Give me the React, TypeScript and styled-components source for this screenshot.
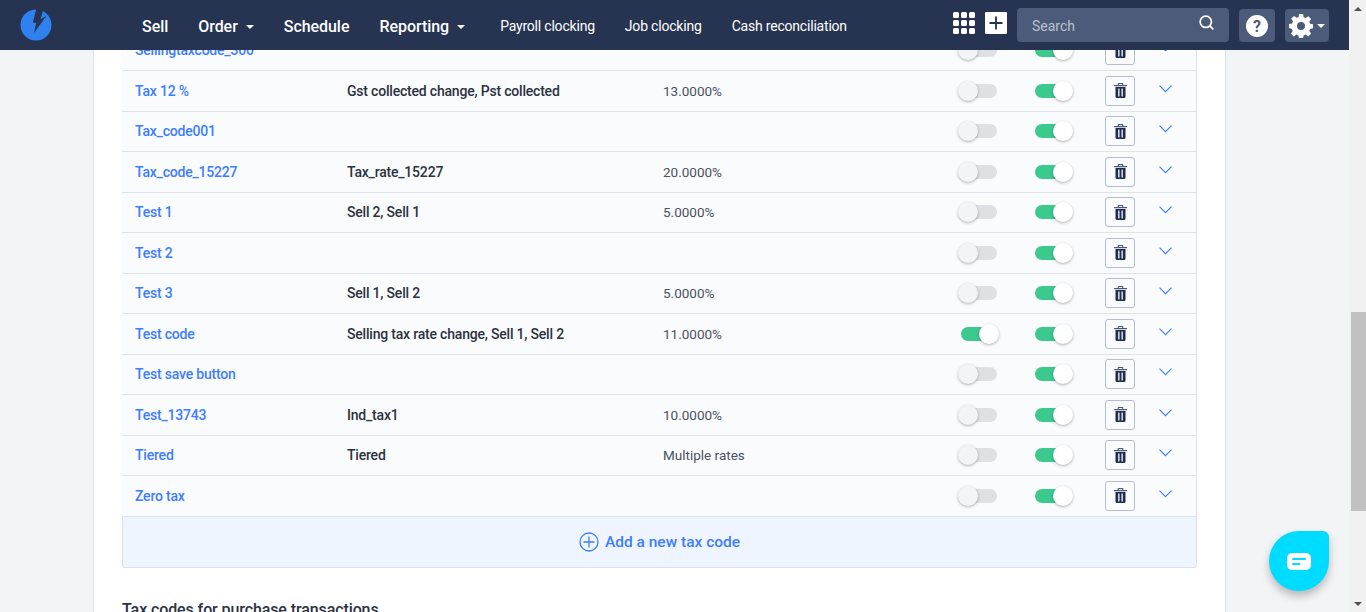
import React from "react";
import styled, { createGlobalStyle } from "styled-components";
import { Search, Plus } from "lucide-react";

const GlobalStyle = createGlobalStyle`
    html, body {
        margin: 0;
        padding: 0;
        height: 100%;
        overflow: hidden;
        font-family: Roboto, "Liberation Sans", sans-serif;
    }
    * { box-sizing: border-box; }
`;

const Shell = styled.div`
    display: flex;
    height: 612px;
    width: 1366px;
    overflow: hidden;
    position: relative;
`;

const PageColumn = styled.div`
    flex: 1;
    min-width: 0;
    display: flex;
    flex-direction: column;
    background: #f3f4f6;
`;

const TopBar = styled.header`
    position: relative;
    z-index: 2;
    flex: 0 0 50px;
    height: 50px;
    background: #273451;
    display: flex;
    align-items: center;
    padding-left: 20px;
    color: #fff;
`;

const Logo = styled.svg`
    width: 32px;
    height: 32px;
    margin-right: 90px;
`;

const MainNav = styled.nav`
    display: flex;
    align-items: center;
    gap: 30px;
    margin-top: 3px;
`;

const MainLink = styled.a`
    display: flex;
    align-items: center;
    font-size: 16px;
    font-weight: 500;
    white-space: nowrap;
    letter-spacing: -0.05px;
`;

const Caret = styled.span<{ $gap?: number }>`
    display: inline-block;
    margin-left: ${(p) => p.$gap ?? 8}px;
    border-left: 4px solid transparent;
    border-right: 4px solid transparent;
    border-top: 4px solid #fff;
`;

const SubNav = styled.nav`
    display: flex;
    gap: 30px;
    margin-left: 35px;
    margin-top: 1px;
`;

const SubLink = styled.a`
    font-size: 14px;
    letter-spacing: -0.2px;
    white-space: nowrap;
    color: #fff;
`;

const TopRight = styled.div`
    margin-left: auto;
    display: flex;
    align-items: center;
    padding-right: 20px;
`;

const AppGrid = styled.div`
    display: grid;
    grid-template-columns: repeat(3, 6px);
    grid-auto-rows: 6px;
    gap: 2px;
    margin: 0 10px 4px 0;
`;

const GridDot = styled.span`
    background: #fff;
    border-radius: 1.5px;
`;

const AddBox = styled.div`
    width: 22px;
    height: 22px;
    background: #fff;
    border-radius: 1px;
    color: #273451;
    display: flex;
    align-items: center;
    justify-content: center;
    margin: 0 10px 4px 0;
`;

const SearchBox = styled.div`
    width: 212px;
    height: 34px;
    border-radius: 4px;
    background: #4d5b7a;
    display: flex;
    align-items: center;
    justify-content: space-between;
    padding: 2px 14px 0 15px;
    font-size: 14px;
    color: #b9c0cf;
    margin-right: 10px;
`;

const SearchIcon = styled(Search)`
    margin-top: -7px;
`;

const IconTile = styled.div<{ $width: number }>`
    width: ${(p) => p.$width}px;
    height: 33px;
    margin-top: 1px;
    border-radius: 4px;
    background: #4d5b7a;
    display: flex;
    align-items: center;
    justify-content: center;
    gap: 3px;
    margin-right: 10px;
    &:last-child { margin-right: 0; }
`;

const Body = styled.main`
    flex: 1;
    min-height: 0;
    overflow: hidden;
    padding-left: 93px;
`;

const Card = styled.div`
    width: 1133px;
    background: #fff;
    border-left: 1px solid #dfe2ea;
    border-right: 1px solid #dfe2ea;
    padding: 0 28px;
    height: 100%;
    overflow: hidden;
`;

const Rows = styled.div`
    margin-top: -19.5px;
`;

const Row = styled.div`
    display: grid;
    grid-template-columns: 212px 316px 298px 74px 70px 54px 1fr;
    align-items: center;
    height: 40.5px;
    padding-left: 13px;
    background: #fafbfd;
    border-bottom: 1px solid #dfe2ea;
    border-right: 1px solid #dfe2ea;
    font-size: 14px;
    letter-spacing: -0.2px;
`;

const CodeLink = styled.a`
    color: #3d7eff;
    font-weight: 500;
`;

const Rates = styled.span`
    color: #2b3240;
    font-weight: 500;
`;

const Percent = styled.span`
    color: #4a5160;
    font-size: 13.5px;
    letter-spacing: 0;
`;

const SwitchTrack = styled.span<{ $on: boolean }>`
    display: block;
    position: relative;
    width: 36px;
    height: 14px;
    border-radius: 7px;
    background: ${(p) => (p.$on ? "#3cc98d" : "#dfe0e4")};
`;

const SwitchKnob = styled.span<{ $on: boolean }>`
    position: absolute;
    top: -3px;
    left: ${(p) => (p.$on ? 18 : -3)}px;
    width: 20px;
    height: 20px;
    border-radius: 50%;
    background: ${(p) => (p.$on ? "#fff" : "#f3f4f6")};
    box-shadow: 0 1px 3px rgba(0, 0, 0, 0.3);
`;

const DeleteBtn = styled.div`
    width: 30px;
    height: 30px;
    border: 1px solid #b4bdd0;
    border-radius: 3px;
    display: flex;
    align-items: center;
    justify-content: center;
`;

const Expand = styled.div`
    display: flex;
    position: relative;
    top: -2px;
`;

const AddRow = styled.div`
    height: 51px;
    background: #eef5fe;
    border: 1px solid #d9e1ec;
    border-radius: 0 0 3px 3px;
    border-top-width: 0;
    display: flex;
    align-items: center;
    justify-content: center;
    gap: 6px;
    color: #3d7eff;
    font-size: 15.5px;
    font-weight: 500;
`;

const SectionTitle = styled.h3`
    margin: 33px 0 0;
    font-size: 16px;
    letter-spacing: -0.1px;
    font-weight: 500;
    color: #2b3240;
    line-height: 18px;
`;

const ScrollBar = styled.div`
    flex: 0 0 17px;
    background: #f1f1f1;
    display: flex;
    flex-direction: column;
    align-items: stretch;
`;

const ArrowCell = styled.div`
    height: 17px;
    display: flex;
    align-items: center;
    justify-content: center;
`;

const Arrow = styled.span<{ $up?: boolean }>`
    border-left: 4px solid transparent;
    border-right: 4px solid transparent;
    ${(p) => (p.$up ? "border-bottom: 4px solid #505050;" : "border-top: 4px solid #505050;")}
`;

const ScrollTrack = styled.div`
    flex: 1;
    padding-top: 295px;
`;

const Thumb = styled.div`
    height: 199px;
    margin-left: 2px;
    background: #c1c1c1;
`;

const ChatBubble = styled.div`
    position: absolute;
    left: 1269px;
    top: 531px;
    width: 60px;
    height: 60px;
    background: #00dcff;
    border-radius: 50% 6px 50% 50%;
    box-shadow: 0 5px 8px rgba(0, 0, 0, 0.25);
    display: flex;
    align-items: center;
    justify-content: center;
`;

const rows = [
    { code: "Sellingtaxcode_300", rates: "", pct: "" },
    { code: "Tax 12 %", rates: "Gst collected change, Pst collected", pct: "13.0000%" },
    { code: "Tax_code001", rates: "", pct: "" },
    { code: "Tax_code_15227", rates: "Tax_rate_15227", pct: "20.0000%" },
    { code: "Test 1", rates: "Sell 2, Sell 1", pct: "5.0000%" },
    { code: "Test 2", rates: "", pct: "" },
    { code: "Test 3", rates: "Sell 1, Sell 2", pct: "5.0000%" },
    { code: "Test code", rates: "Selling tax rate change, Sell 1, Sell 2", pct: "11.0000%", on: true },
    { code: "Test save button", rates: "", pct: "" },
    { code: "Test_13743", rates: "Ind_tax1", pct: "10.0000%" },
    { code: "Tiered", rates: "Tiered", pct: "Multiple rates" },
    { code: "Zero tax", rates: "", pct: "" },
];

const TrashIcon = () => (
    <svg width="13" height="15" viewBox="0 0 13 15">
        <path fill="#4a5878" d="M4.500 0h4a.8.8 0 0 1 .8.8V2h3.200a.5.5 0 0 1 0 1.300H.5A.5.5 0 0 1 .5 2h3.200V.8A.8.8 0 0 1 4.500 0zm.3 1v1h3.400V1z" />
        <path
            fill="#1d2c4f"
            fillRule="evenodd"
            d="M1.500 4h10v9.500a1.500 1.500 0 0 1-1.500 1.500H3a1.500 1.500 0 0 1-1.500-1.500zM4.200 5.500v8h1.300v-8zm3.300 0v8h1.300v-8z"
        />
    </svg>
);

const Toggle = ({ on }: { on: boolean }) => (
    <SwitchTrack $on={on}>
        <SwitchKnob $on={on} />
    </SwitchTrack>
);

const App = () => (
    <Shell>
        <GlobalStyle />
        <PageColumn>
            <TopBar>
                <Logo viewBox="0 0 32 32">
                    <circle cx="16" cy="16" r="15.500" fill="#3081f0" />
                    <path fill="#273451" d="M16.500-1 23 1.500 20.500 10.300 26.500 6.700 14 24 16.200 13.700H12.800z" />
                </Logo>
                <MainNav>
                    <MainLink>Sell</MainLink>
                    <MainLink>
                        Order<Caret />
                    </MainLink>
                    <MainLink>Schedule</MainLink>
                    <MainLink>
                        Reporting<Caret />
                    </MainLink>
                </MainNav>
                <SubNav>
                    <SubLink>Payroll clocking</SubLink>
                    <SubLink>Job clocking</SubLink>
                    <SubLink>Cash reconciliation</SubLink>
                </SubNav>
                <TopRight>
                    <AppGrid>
                        {Array.from({ length: 9 }).map((_, i) => (
                            <GridDot key={i} />
                        ))}
                    </AppGrid>
                    <AddBox>
                        <Plus size={20} strokeWidth={2.2} />
                    </AddBox>
                    <SearchBox>
                        Search
                        <SearchIcon size={17} color="#fff" strokeWidth={2.4} />
                    </SearchBox>
                    <IconTile $width={36}>
                        <svg width="24" height="24" viewBox="0 0 24 24">
                            <circle cx="12" cy="12" r="11" fill="#fff" />
                            <text x="12" y="17.500" textAnchor="middle" fontSize="16" fontWeight="700" fill="#4d5b7a" fontFamily="Roboto">
                                ?
                            </text>
                        </svg>
                    </IconTile>
                    <IconTile $width={44}>
                        <svg width="24" height="24" viewBox="0 0 24 24" fill="#fff">
                            <path
                                fillRule="evenodd"
                                d="M10 0h4l.6 3.200 2 .8L19.300 2.200l2.800 2.800-1.800 2.700.8 2 3.200.6v4l-3.200.6-.8 2 1.800 2.700-2.800 2.800-2.700-1.800-2 .8-.6 3.200h-4l-.6-3.200-2-.8-2.700 1.800-2.800-2.800 1.800-2.700-.8-2L0 14v-4l3.200-.6.8-2-1.800-2.700L5 1.900l2.700 1.800 2-.8zM12 8a4 4 0 1 0 0 8 4 4 0 0 0 0-8z"
                            />
                        </svg>
                        <Caret $gap={1} />
                    </IconTile>
                </TopRight>
            </TopBar>
            <Body>
                <Card>
                    <Rows>
                        {rows.map((r) => (
                            <Row key={r.code}>
                                <CodeLink>{r.code}</CodeLink>
                                <Rates>{r.rates}</Rates>
                                <Percent>{r.pct}</Percent>
                                <Toggle on={!!r.on} />
                                <Toggle on />
                                <DeleteBtn>
                                    <TrashIcon />
                                </DeleteBtn>
                                <Expand>
                                    <svg width="13" height="8" viewBox="0 0 13 8" fill="none" stroke="#3d7eff" strokeWidth="1.2">
                                        <path d="M.5.7l6 6 6-6" />
                                    </svg>
                                </Expand>
                            </Row>
                        ))}
                    </Rows>
                    <AddRow>
                        <svg width="20" height="20" viewBox="0 0 20 20" fill="none" stroke="#3d7eff" strokeWidth="1.3">
                            <circle cx="10" cy="10" r="9" />
                            <path d="M10 4.500v11M4.500 10h11" />
                        </svg>
                        Add a new tax code
                    </AddRow>
                    <SectionTitle>Tax codes for purchase transactions</SectionTitle>
                </Card>
            </Body>
        </PageColumn>
        <ScrollBar>
            <ArrowCell>
                <Arrow $up />
            </ArrowCell>
            <ScrollTrack>
                <Thumb />
            </ScrollTrack>
            <ArrowCell>
                <Arrow />
            </ArrowCell>
        </ScrollBar>
        <ChatBubble>
            <svg width="24" height="17" viewBox="0 0 24 17">
                <rect x="0" y="0" width="24" height="17" rx="5" fill="#fff" />
                <rect x="5" y="5" width="14" height="2" rx="1" fill="#00dcff" />
                <rect x="5" y="10" width="8.500" height="2" rx="1" fill="#00dcff" />
            </svg>
        </ChatBubble>
    </Shell>
);

export default App;
